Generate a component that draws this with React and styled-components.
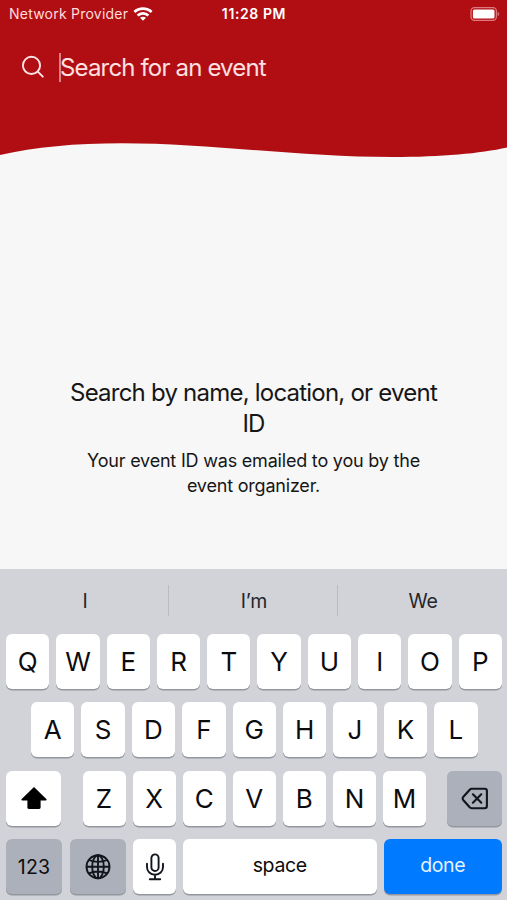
import React, { useState } from 'react';
import styled, { createGlobalStyle } from 'styled-components';

const rowOne = ['Q', 'W', 'E', 'R', 'T', 'Y', 'U', 'I', 'O', 'P'];
const rowTwo = ['A', 'S', 'D', 'F', 'G', 'H', 'J', 'K', 'L'];
const rowThree = ['Z', 'X', 'C', 'V', 'B', 'N', 'M'];
const suggestions = ['I', 'I’m', 'We'];

function StatusBar() {
  return (
    <Status>
      <Carrier>
        <span>Network Provider</span>
        <svg width="20" height="14" viewBox="0 0 20 14" fill="none" stroke="#fff" strokeWidth="2.7">
          <path d="M1.4 5C6 .5 14 .5 18.6 5" />
          <path d="M4.6 8.5c3-2.9 7.8-2.9 10.8 0" />
          <path d="M10 13.8l-3-3.1c1.7-1.4 4.3-1.4 6 0z" fill="#fff" stroke="none" />
        </svg>
      </Carrier>
      <Time>11:28 PM</Time>
      <Battery>
        <svg width="30" height="14" viewBox="0 0 30 14">
          <rect x="1" y="0.7" width="25.4" height="12.6" rx="3.5" fill="none" stroke="#e0797d" strokeWidth="1.3" />
          <rect x="2.9" y="2.6" width="21.6" height="8.8" rx="1.5" fill="#fff" />
          <path d="M27.7 4.8c2 .8 2 3.6 0 4.4z" fill="#e0797d" />
        </svg>
      </Battery>
    </Status>
  );
}

function Keyboard() {
  return (
    <Board>
      <Suggestions>
        {suggestions.map((word) => <Suggestion key={word}>{word}</Suggestion>)}
      </Suggestions>
      <Row>
        {rowOne.map((letter) => <Key key={letter}>{letter}</Key>)}
      </Row>
      <Row $inset>
        {rowTwo.map((letter) => <Key key={letter}>{letter}</Key>)}
      </Row>
      <Row>
        <Key $width="55px" $after="14.5px" aria-label="shift">
          <svg width="28" height="24" viewBox="0 0 28 24">
            <path d="M14 1L26.3 13.1c.6.7.4 1.5-.6 1.5H20.6v6.9c0 .9-.5 1.4-1.4 1.4H8.8c-.9 0-1.4-.5-1.4-1.4v-6.9H2.3c-1 0-1.2-.8-.6-1.5z" fill="#000" />
          </svg>
        </Key>
        {rowThree.map((letter) => <Key key={letter}>{letter}</Key>)}
        <Key $width="55px" $before="14px" $dark aria-label="delete">
          <svg width="28" height="24" viewBox="-0.7 -1 28 24" fill="none" stroke="#11151c" strokeWidth="2.1" strokeLinecap="round" strokeLinejoin="round">
            <path d="M10 1.8H23a2.2 2.2 0 0 1 2.2 2.2v15a2.2 2.2 0 0 1-2.2 2.2H10a3 3 0 0 1-2-.9L1.7 13.2a2.3 2.3 0 0 1 0-3.4L8 2.7a3 3 0 0 1 2-.9z" />
            <path d="M11.2 7.300l8.400 8.400M19.600 7.300l-8.400 8.400" />
          </svg>
        </Key>
      </Row>
      <Row>
        <Key $width="56px" $size="19.5px" $spacing="0.2px" $dark>123</Key>
        <Key $width="56px" $before="1px" $dark aria-label="next keyboard">
          <svg width="26" height="26" viewBox="0 0 26 26" fill="none" stroke="#11151c" strokeWidth="1.9">
            <circle cx="13" cy="12.7" r="11.5" />
            <ellipse cx="13" cy="12.7" rx="5.8" ry="11.5" />
            <path d="M13 1.2v23M1.5 12.7h23M4 6c5 2.5 13 2.5 18 0M4 19.4c5-2.5 13-2.5 18 0" />
          </svg>
        </Key>
        <Key $width="43px" aria-label="dictate">
          <svg width="20" height="28" viewBox="0 0 20 28" fill="none" stroke="#11151c" strokeWidth="1.9" strokeLinecap="round">
            <rect x="6.4" y="1.4" width="7.2" height="16.6" rx="3.6" />
            <path d="M2 10.8v3.1c0 4.6 3.4 7.8 8 7.8s8-3.2 8-7.8v-3.1M10 21.7v4.6M4.800 26.3h10.4" />
          </svg>
        </Key>
        <Key $size="19.5px" $spacing="-0.35px" $lift>space</Key>
        <Key $width="118.5px" $size="19.5px" $spacing="-0.35px" $primary $lift>done</Key>
      </Row>
    </Board>
  );
}

function App() {
  const [query, setQuery] = useState('');

  return (
    <Screen>
      <GlobalStyle />
      <Header>
        <StatusBar />
        <SearchBar>
          <svg width="24" height="24" viewBox="0 0 24 24" fill="none" stroke="#ffe4e4" strokeWidth="1.9" strokeLinecap="round">
            <circle cx="10.5" cy="10.4" r="8.6" />
            <path d="M16.8 16.7l5 5" />
          </svg>
          <Caret />
          <SearchInput
            value={query}
            onChange={(e) => setQuery(e.target.value)}
            placeholder="Search for an event"
          />
        </SearchBar>
      </Header>
      <Wave viewBox="0 0 507 28" preserveAspectRatio="none">
        <path d="M0 0H507V17.5C480 23.5 442 27 393 27C300 27 210 13.2 122 13.2C75 13.2 35 17 0 25Z" fill="#b10e14" />
      </Wave>
      <Content>
        <Title>Search by name, location, or event ID</Title>
        <Hint>Your event ID was emailed to you by the event organizer.</Hint>
      </Content>
      <Keyboard />
    </Screen>
  );
}

const GlobalStyle = createGlobalStyle`
  * {
    box-sizing: border-box;
  }
  body {
    margin: 0;
    font-family: Inter, "Liberation Sans", sans-serif;
  }
`;

const Screen = styled.div`
  display: flex;
  flex-direction: column;
  height: 900px;
  overflow: hidden;
  background: #f7f7f7;
`;

const Header = styled.header`
  height: 130px;
  background: #b10e14;
`;

const Status = styled.div`
  display: grid;
  grid-template-columns: 1fr auto 1fr;
  align-items: center;
  height: 27px;
  padding: 0 7px 0 9px;
  color: #fff;
  font-size: 14px;
`;

const Carrier = styled.div`
  display: flex;
  align-items: center;
  gap: 5px;
  color: #ffdcdc;
  letter-spacing: 0.23px;
  white-space: nowrap;
`;

const Time = styled.div`
  font-weight: 600;
  letter-spacing: 0.6px;
  margin-right: 1px;
`;

const Battery = styled.div`
  display: flex;
  justify-content: flex-end;
`;

const SearchBar = styled.label`
  display: flex;
  align-items: center;
  height: 80px;
  padding-left: 21px;
`;

const Caret = styled.span`
  width: 2px;
  height: 29px;
  margin-left: 14px;
  background: #d98084;
`;

const SearchInput = styled.input`
  flex: 1;
  min-width: 0;
  margin-left: -1px;
  padding: 0;
  border: none;
  outline: none;
  background: transparent;
  color: #fff;
  font-family: inherit;
  font-size: 24px;
  letter-spacing: -0.84px;
  &::placeholder {
    color: #ffe0e0;
    opacity: 1;
  }
`;

const Wave = styled.svg`
  display: block;
  width: 100%;
  height: 28px;
`;

const Content = styled.main`
  flex: 1;
  padding: 220px 60px 0;
  text-align: center;
  color: #161616;
`;

const Title = styled.h1`
  margin: 0;
  font-size: 24px;
  font-weight: 400;
  line-height: 30.5px;
  letter-spacing: -0.78px;
`;

const Hint = styled.p`
  margin: 10px 20px 0;
  font-size: 18px;
  line-height: 24.5px;
  letter-spacing: -0.2px;
`;

const Board = styled.section`
  display: flex;
  flex-direction: column;
  gap: 13.5px;
  height: 331px;
  padding: 0 5px 0 6px;
  background: #d1d3d9;
`;

const Suggestions = styled.div`
  display: grid;
  grid-template-columns: repeat(3, 1fr);
  align-items: center;
  height: 51px;
  margin: 0 -5px 0 -6px;
  padding-top: 12px;
`;

const Suggestion = styled.div`
  height: 31px;
  padding-left: 1px;
  line-height: 32px;
  text-align: center;
  color: #24262b;
  font-size: 19.5px;
  letter-spacing: -0.2px;
  & + & {
    margin-left: -1px;
    border-left: 1px solid #b9bbc1;
  }
`;

const Row = styled.div`
  display: flex;
  gap: 7px;
  height: 55px;
  flex-shrink: 0;
  padding: ${(props) => (props.$inset ? '0 24.5px 0 25px' : '0')};
`;

const Key = styled.button`
  display: flex;
  align-items: center;
  justify-content: center;
  flex: ${(props) => (props.$width ? `0 0 ${props.$width}` : '1 1 0')};
  min-width: 0;
  margin: 0 ${(props) => props.$after || '0'} 0 ${(props) => props.$before || '0'};
  padding: 0 0 ${(props) => (props.$lift ? '3px' : '0')};
  border: none;
  border-radius: 6px;
  background: ${(props) => (props.$primary ? '#007aff' : props.$dark ? '#abb0bb' : '#fff')};
  color: ${(props) => (props.$primary ? '#e4f2ff' : '#0c0c0e')};
  box-shadow: 0 1.5px 0 #94979d;
  font-family: inherit;
  font-size: ${(props) => props.$size || '26px'};
  letter-spacing: ${(props) => props.$spacing || '0'};
`;

export default App;
